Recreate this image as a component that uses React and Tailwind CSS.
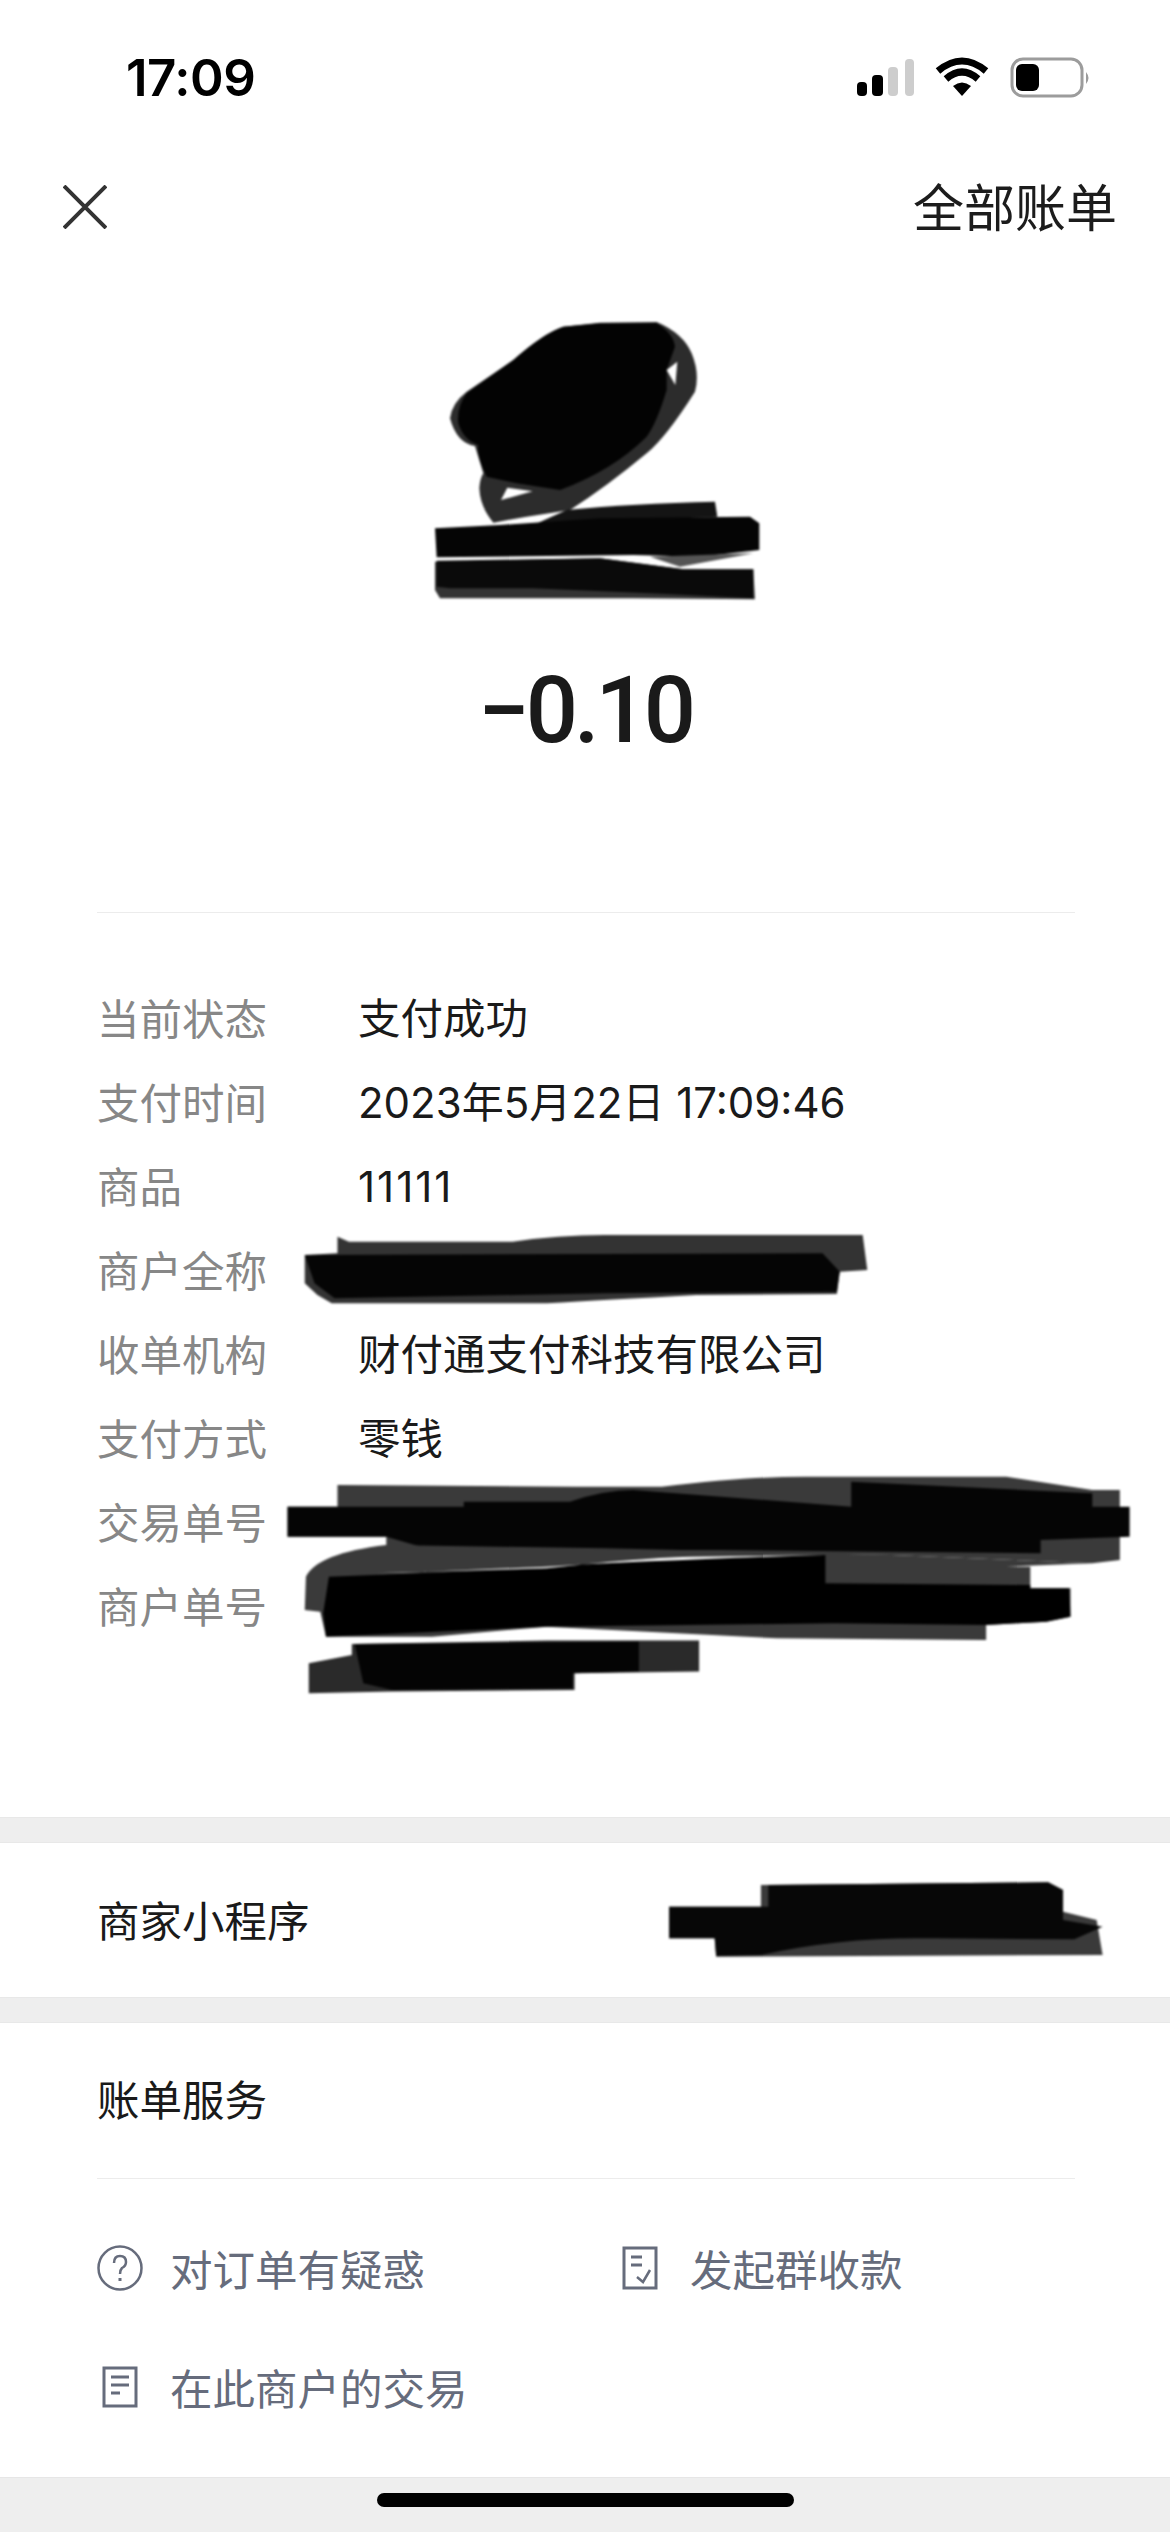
const CJK = "font-['Noto_Sans_CJK_SC','Liberation_Sans',sans-serif]";
const VALUE_FONT = "font-['Inter','Noto_Sans_CJK_SC',sans-serif]";

const details = [
  { label: "当前状态", value: "支付成功" },
  { label: "支付时间", value: "2023年5月22日 17:09:46", size: "text-[42px]" },
  { label: "商品", value: "11111", size: "text-[42px] tracking-[2px]" },
  { label: "商户全称", value: "" },
  { label: "收单机构", value: "财付通支付科技有限公司" },
  { label: "支付方式", value: "零钱" },
  { label: "交易单号", value: "" },
  { label: "商户单号", value: "" },
];

const StatusBar = () => (
  <div className="h-[155px] flex items-start justify-between pt-[50px] pl-[126px] pr-[78px]">
    <span className="font-['Inter',sans-serif] font-semibold text-[51px] leading-[56px] tracking-[-0.5px] text-black">17:09</span>
    <svg width="237" height="42" viewBox="0 0 237 42" className="mt-[7px]">
      <rect x="2" y="25" width="10" height="14" rx="4" fill="#000" />
      <rect x="17" y="18" width="11" height="21" rx="4" fill="#000" />
      <rect x="33" y="10" width="10" height="29" rx="4" fill="#cdcdcd" />
      <rect x="50" y="2" width="9" height="37" rx="4" fill="#cdcdcd" />
      <path d="M83 14 Q107 -6 131 14" fill="none" stroke="#000" strokeWidth="7" />
      <path d="M91 22 Q107 8 123 22" fill="none" stroke="#000" strokeWidth="7" />
      <path d="M98 29 Q107 22 116 29 L107 39 Z" fill="#000" />
      <rect x="157" y="2" width="70" height="37" rx="11" fill="none" stroke="#9c9c9c" strokeWidth="3" />
      <rect x="161" y="7" width="23" height="27" rx="6" fill="#000" />
      <path d="M231 15 Q236 21 231 27 Z" fill="#9c9c9c" />
    </svg>
  </div>
);

const NavBar = () => (
  <div className="h-[104px] flex items-center justify-between pl-[63px] pr-[53px]">
    <svg width="44" height="44" viewBox="0 0 44 44">
      <path d="M1 1 L43 43 M43 1 L1 43" stroke="#333" strokeWidth="4" fill="none" />
    </svg>
    <span className={`${CJK} text-[51px] leading-[60px] text-[#1c1c1c] mb-[4px]`}>全部账单</span>
  </div>
);

const QuestionIcon = () => (
  <svg width="46" height="46" viewBox="0 0 46 46" className="shrink-0">
    <circle cx="23" cy="23" r="21.5" fill="none" stroke="#666c7c" strokeWidth="2.5" />
    <path d="M17 18 Q17 11 23 11 Q29 11 29 17 Q29 21 25 23 Q23 25 23 29" fill="none" stroke="#666c7c" strokeWidth="2.5" />
    <rect x="21.5" y="33" width="3" height="3" fill="#666c7c" />
  </svg>
);

const BillCheckIcon = () => (
  <svg width="46" height="44" viewBox="0 0 46 44" className="shrink-0">
    <path d="M7 2 H39 V42 H7 Z" fill="none" stroke="#666c7c" strokeWidth="3" />
    <path d="M14 11 H25 M14 19 H25" stroke="#666c7c" strokeWidth="3" />
    <path d="M20 31 L26 36 L33 24" fill="none" stroke="#666c7c" strokeWidth="2.5" />
  </svg>
);

const BillIcon = () => (
  <svg width="46" height="42" viewBox="0 0 46 42" className="shrink-0">
    <path d="M7 2 H39 V40 H7 Z" fill="none" stroke="#666c7c" strokeWidth="3" />
    <path d="M14 11 H32 M14 19 H32 M14 27 H23" stroke="#666c7c" strokeWidth="3" />
  </svg>
);

const Action = ({ icon, text, className }) => (
  <div className={`flex items-center gap-[27px] ${className}`}>
    {icon}
    <span className={`${CJK} text-[42.5px] leading-[50px] text-[#666c7c]`}>{text}</span>
  </div>
);

// the hand drawn black marks over the private values
const Scribbles = () => (
  <svg width="1170" height="2532" viewBox="0 0 1170 2532" className="absolute top-0 left-0 pointer-events-none blur-[1px]">
    <g transform="translate(400 290) scale(0.3333)">
      <path d="M150 385 Q155 340 200 305 L340 210 Q430 130 490 110 L600 98 L770 96 Q850 130 875 190 Q900 250 885 305 Q800 440 740 490 Q620 590 510 660 L380 680 L280 698 Q240 650 238 595 Q240 565 250 550 L225 468 Q170 460 150 385 Z" fill="#2c2c2c" />
      <path d="M200 310 L340 210 Q430 130 490 110 L600 100 L770 100 Q820 130 825 170 L800 240 L800 300 Q770 400 740 440 Q640 540 480 600 L350 580 L260 560 Q230 500 235 465 Q190 450 175 400 Q170 350 200 310 Z" fill="#030303" />
      <path d="M832 215 L800 240 L826 285 Z" fill="#fff" />
      <path d="M322 593 L303 630 L398 604 Z" fill="#fff" />
      <path d="M500 660 Q700 640 945 635 L952 680 L400 705 Z" fill="#141414" />
      <path d="M105 715 L300 705 L600 685 L1050 680 L1078 700 L1078 780 L900 800 L700 795 L110 802 Z" fill="#050505" />
      <path d="M750 800 L1060 790 L840 830 Z" fill="#555" />
      <path d="M105 815 L600 805 L850 838 L1060 838 L1065 928 L700 925 L120 925 L105 900 Z" fill="#333" />
      <path d="M110 812 L600 805 L850 838 L1060 838 L1060 925 L800 912 L400 895 L150 895 L110 890 Z" fill="#0a0a0a" />
    </g>
    <g transform="translate(260 1220) scale(0.574 0.3333)">
      <path d="M135 50 L155 65 L440 65 Q520 45 600 45 L1050 45 L1058 150 L1010 155 L1005 222 L760 225 Q600 240 500 250 L125 250 L100 225 L78 190 L78 105 L135 100 Z" fill="#333" />
      <path d="M78 105 L980 100 L1010 155 L1005 215 L600 220 L130 235 L95 190 Z" fill="#050505" />
      <path d="M135 795 L550 800 L700 800 Q850 770 950 770 L1300 770 L1450 810 L1498 810 L1498 1020 L1450 1030 L1100 1005 L220 985 L220 950 L48 950 L48 860 L135 860 Z" fill="#3a3a3a" />
      <path d="M48 860 L355 860 L355 845 L540 845 Q600 810 650 810 L1030 860 L1030 785 L1450 820 L1450 860 L1515 860 L1515 950 L1360 960 L1360 1000 L800 990 L300 990 L220 950 L48 950 Z" fill="#050505" />
      <path d="M78 1170 L80 1070 Q100 1000 220 975 L600 985 L1100 1005 L1450 1030 L1300 1040 L1342 1040 L1342 1105 L1412 1105 L1412 1190 L1370 1205 L1265 1215 L1265 1260 L900 1255 L500 1220 L300 1250 L115 1250 L105 1175 Z" fill="#3a3a3a" />
      <path d="M120 1070 L500 1045 Q650 1015 750 1010 L985 1005 L985 1090 L1342 1095 L1342 1105 L1410 1105 L1412 1190 L1370 1205 L1265 1215 L1000 1210 L500 1220 L115 1250 L110 1180 Z" fill="#000" />
      <path d="M200 1060 L500 1045 Q650 1015 750 1010 L985 1005 Q700 1020 500 1040 L250 1058 Z" fill="#fff" />
      <path d="M160 1272 L500 1262 L765 1262 L765 1355 L548 1360 L548 1410 L230 1415 L85 1420 L85 1330 L160 1305 Z" fill="#2a2a2a" />
      <path d="M165 1272 L660 1265 L660 1355 L545 1360 L545 1405 L230 1410 L180 1390 Z" fill="#040404" />
    </g>
    <g transform="translate(0 1780) scale(0.746 0.3333)">
      <path d="M1020 315 L1405 307 L1425 330 L1425 395 L1470 420 L1478 525 L960 530 L958 475 L897 475 L897 380 L1020 380 Z" fill="#3a3a3a" />
      <path d="M1030 315 L1405 307 L1425 330 L1425 420 L1478 440 L1440 478 L1250 475 Q1130 470 1020 525 L960 528 L958 475 L897 475 L897 380 L1030 380 Z" fill="#070707" />
    </g>
  </svg>
);

const GrayBand = () => <div className="h-[26px] bg-[#eeeeee] border-y border-[#e8e8e8]"></div>;

const App = () => {
  return (
    <div className={`relative w-[1170px] h-[2532px] bg-white overflow-hidden flex flex-col ${CJK}`}>
      <StatusBar />
      <NavBar />

      <div className="h-[653px] flex flex-col items-center pt-[394px]">
        <span className="font-['Roboto',sans-serif] font-medium text-[92px] leading-[116px] tracking-[-4px] text-[#1a1a1a]">−0.10</span>
      </div>

      <div className="ml-[97px] mr-[95px] h-[905px] border-t border-[#ececec] pt-[63px]">
        {details.map((row) => (
          <div key={row.label} className="h-[84px] flex items-center">
            <span className="w-[261px] text-[42.5px] text-[#878787] mb-[2px]">{row.label}</span>
            <span className={`${VALUE_FONT} ${row.size || "text-[42.5px]"} text-[#1a1a1a] mt-[1px]`}>{row.value}</span>
          </div>
        ))}
      </div>

      <GrayBand />
      <div className="h-[154px] flex items-center px-[97px]">
        <span className="text-[42.5px] text-[#1a1a1a] mb-[3px]">商家小程序</span>
      </div>
      <GrayBand />

      <div className="ml-[97px] mr-[95px] h-[156px] flex items-center border-b border-[#ececec]">
        <span className="text-[42.5px] text-[#1a1a1a] mb-[6px]">账单服务</span>
      </div>

      <div className="flex-1 pl-[97px] pt-[64px] flex flex-col gap-[69px]">
        <div className="flex">
          <Action className="w-[520px]" icon={<QuestionIcon />} text="对订单有疑惑" />
          <Action icon={<BillCheckIcon />} text="发起群收款" />
        </div>
        <Action icon={<BillIcon />} text="在此商户的交易" />
      </div>

      <div className="h-[55px] bg-[#eeeeee] border-t border-[#e6e6e6] flex justify-center pt-[15px]">
        <div className="w-[417px] h-[14px] rounded-full bg-black"></div>
      </div>

      <Scribbles />
    </div>
  );
};

export default App;
